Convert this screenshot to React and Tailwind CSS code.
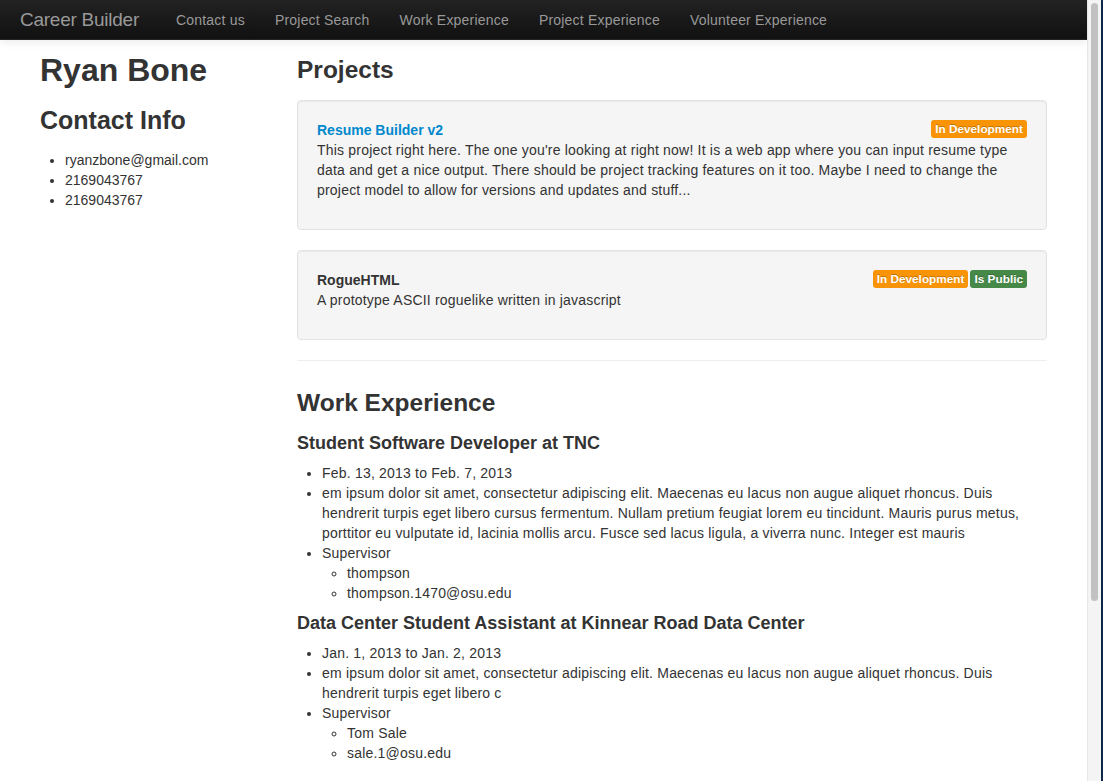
import React from 'react'

const navLinks = [
  'Contact us',
  'Project Search',
  'Work Experience',
  'Project Experience',
  'Volunteer Experience',
]

const projects = [
  {
    title: 'Resume Builder v2',
    link: true,
    labels: [{ text: 'In Development', tone: 'warning' }],
    desc: [
      "This project right here. The one you're looking at right now! It is a web app where you can input resume type",
      'data and get a nice output. There should be project tracking features on it too. Maybe I need to change the',
      'project model to allow for versions and updates and stuff...',
    ],
  },
  {
    title: 'RogueHTML',
    link: false,
    labels: [
      { text: 'In Development', tone: 'warning' },
      { text: 'Is Public', tone: 'success' },
    ],
    desc: ['A prototype ASCII roguelike written in javascript'],
  },
]

const jobs = [
  {
    title: 'Student Software Developer at TNC',
    dates: 'Feb. 13, 2013 to Feb. 7, 2013',
    desc: [
      'em ipsum dolor sit amet, consectetur adipiscing elit. Maecenas eu lacus non augue aliquet rhoncus. Duis',
      'hendrerit turpis eget libero cursus fermentum. Nullam pretium feugiat lorem eu tincidunt. Mauris purus metus,',
      'porttitor eu vulputate id, lacinia mollis arcu. Fusce sed lacus ligula, a viverra nunc. Integer est mauris',
    ],
    supervisor: ['thompson', 'thompson.1470@osu.edu'],
  },
  {
    title: 'Data Center Student Assistant at Kinnear Road Data Center',
    dates: 'Jan. 1, 2013 to Jan. 2, 2013',
    desc: [
      'em ipsum dolor sit amet, consectetur adipiscing elit. Maecenas eu lacus non augue aliquet rhoncus. Duis',
      'hendrerit turpis eget libero c',
    ],
    supervisor: ['Tom Sale', 'sale.1@osu.edu'],
  },
]

function Lines({ lines }) {
  return lines.map((l, i) => (
    <span key={i} className="block whitespace-nowrap">
      {l}
    </span>
  ))
}

function Label({ text, tone }) {
  return (
    <span
      className={`inline-block rounded-[3px] px-[4px] py-[2px] text-[11.8px] font-bold leading-[14px] tracking-normal text-white [text-shadow:0_-1px_0_rgba(0,0,0,0.25)] ${
        tone === 'success' ? 'bg-[#468847]' : 'bg-[#f89406]'
      }`}
    >
      {text}
    </span>
  )
}

function Navbar() {
  return (
    <div className="flex h-[40px] items-center border-b border-[#252525] bg-gradient-to-b from-[#222222] to-[#111111] shadow-[0_1px_10px_rgba(0,0,0,0.1)]">
      <span className="pl-[20px] pr-[22px] text-[19px] leading-[20px] tracking-[-0.25px] text-[#999999]">
        Career Builder
      </span>
      {navLinks.map((l) => (
        <span key={l} className="px-[15px] text-[14px] leading-[20px] text-[#999999]">
          {l}
        </span>
      ))}
    </div>
  )
}

function ProjectCard({ p }) {
  return (
    <div className="mb-[20px] rounded-[4px] border border-[#e3e3e3] bg-[#f5f5f5] p-[19px] shadow-[inset_0_1px_1px_rgba(0,0,0,0.05)]">
      <div className="flex items-start justify-between">
        <span className={`font-bold tracking-normal ${p.link ? 'text-[#0088cc]' : 'text-[#333333]'}`}>
          {p.title}
        </span>
        <div className="flex gap-[2px]">
          {p.labels.map((lb) => (
            <Label key={lb.text} {...lb} />
          ))}
        </div>
      </div>
      <p className="mb-[10px]">
        <Lines lines={p.desc} />
      </p>
    </div>
  )
}

function Job({ job }) {
  return (
    <div>
      <h3 className="my-[10px] text-[18px] font-bold leading-[20px] tracking-normal">{job.title}</h3>
      <ul className="mb-[10px] ml-[25px] list-disc">
        <li>{job.dates}</li>
        <li>
          <Lines lines={job.desc} />
        </li>
        <li>
          Supervisor
          <ul className="ml-[25px] list-[circle]">
            {job.supervisor.map((s) => (
              <li key={s}>{s}</li>
            ))}
          </ul>
        </li>
      </ul>
    </div>
  )
}

export default function App() {
  return (
    <div
      className="flex h-[781px] overflow-hidden bg-white text-[14px] leading-[20px] tracking-[0.2px] text-[#333333]"
      style={{ fontFamily: '"Liberation Sans", Arial, Helvetica, sans-serif' }}
    >
      <div className="w-[1087px] shrink-0">
        <Navbar />
        <div className="flex gap-[25px] px-[40px]">
          <div className="w-[232px] shrink-0">
            <h1 className="mt-[10px] text-[32px] font-bold leading-[40px] tracking-normal">Ryan Bone</h1>
            <h2 className="mt-[10px] text-[25px] font-bold leading-[40px] tracking-normal">Contact Info</h2>
            <ul className="ml-[25px] mt-[10px] list-disc tracking-normal">
              <li>ryanzbone@gmail.com</li>
              <li>2169043767</li>
              <li>2169043767</li>
            </ul>
          </div>
          <div className="w-[750px] shrink-0">
            <h2 className="my-[10px] text-[24.5px] font-bold leading-[40px] tracking-normal">Projects</h2>
            {projects.map((p) => (
              <ProjectCard key={p.title} p={p} />
            ))}
            <hr className="my-[20px] border-0 border-b border-t border-b-white border-t-[#eeeeee]" />
            <h2 className="mb-[10px] pt-[1px] text-[24.5px] font-bold leading-[40px] tracking-normal">
              Work Experience
            </h2>
            {jobs.map((j) => (
              <Job key={j.title} job={j} />
            ))}
          </div>
        </div>
      </div>
      <div className="flex w-[14px] shrink-0 flex-col border-l border-[#e6e6e6] bg-[#f4f4f4] px-[3px] pt-[3px]">
        <div className="h-[598px] rounded-full bg-[#c1c1c1]" />
      </div>
      <div className="w-[2px] shrink-0 bg-[#0d2747]" />
    </div>
  )
}
